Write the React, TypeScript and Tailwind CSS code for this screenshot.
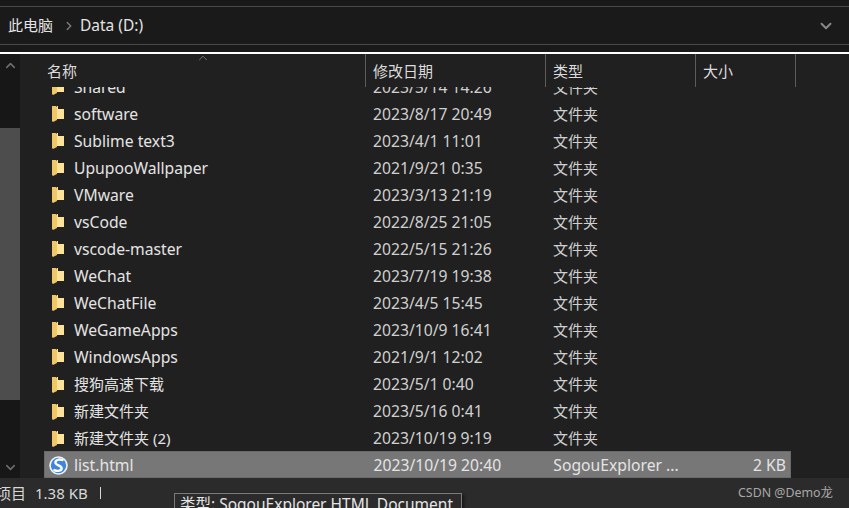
import { ChevronDown, ChevronRight, ChevronUp } from 'lucide-react';

const rows = [
  ['Shared', '2023/5/14 14:26'],
  ['software', '2023/8/17 20:49'],
  ['Sublime text3', '2023/4/1 11:01'],
  ['UpupooWallpaper', '2021/9/21 0:35'],
  ['VMware', '2023/3/13 21:19'],
  ['vsCode', '2022/8/25 21:05'],
  ['vscode-master', '2022/5/15 21:26'],
  ['WeChat', '2023/7/19 19:38'],
  ['WeChatFile', '2023/4/5 15:45'],
  ['WeGameApps', '2023/10/9 16:41'],
  ['WindowsApps', '2021/9/1 12:02'],
  ['搜狗高速下载', '2023/5/1 0:40'],
  ['新建文件夹', '2023/5/16 0:41'],
  ['新建文件夹 (2)', '2023/10/19 9:19'],
];

function FolderIcon() {
  return (
    <svg width="13" height="18" viewBox="0 0 13 18" className="shrink-0">
      <path d="M0 1h4l1 1v13l-4 2-1-1z" fill="#f0c766" />
      <path d="M5 1h1v3h6v10H5z" fill="#fde29a" />
    </svg>
  );
}

function SogouIcon() {
  return (
    <svg width="19" height="19" viewBox="0 0 18 18" className="shrink-0">
      <circle cx="9" cy="9" r="8.800" fill="#f2f6fb" />
      <circle cx="9" cy="9" r="7.300" fill="#3f86e0" />
      <path d="M12.800 3.800C9.500 2.500 5.500 4 6.200 6.800 6.800 9 11.800 8.800 12 11.400 12.200 13.800 8.500 15 5 13.400" fill="none" stroke="#fff" strokeWidth="2.200" strokeLinecap="round" />
    </svg>
  );
}

export default function App() {
  return (
    <div className="w-[849px] h-[508px] overflow-hidden flex flex-col bg-[#202020] text-[#e4e4e4] text-[15px] font-['Noto_Sans','Noto_Sans_CJK_SC',sans-serif]">
      {/* address bar */}
      <div className="h-[7px] shrink-0 border-b border-[#4a4a4a] bg-[#191919]" />
      <div className="h-[38px] shrink-0 flex items-center justify-between border-b border-[#4a4a4a] bg-[#1a1a1a] pl-2 pr-[5px]">
        <div className="flex items-center">
          <span>此电脑</span>
          <ChevronRight size={14} strokeWidth={2.500} className="ml-[9px] mr-[4px] text-[#7a7a7a]" />
          <span className="text-[15.500px]">Data (D:)</span>
        </div>
        <ChevronDown size={18} strokeWidth={2.500} className="mr-[9px] text-[#8a8a8a]" />
      </div>
      <div className="h-[7px] shrink-0 bg-[#191919]" />
      <div className="h-[2px] shrink-0 bg-white" />

      <div className="flex-1 min-h-0 flex">
        {/* left scrollbar */}
        <div className="w-[20px] shrink-0 flex flex-col items-center bg-[#171717] pt-[4px] pb-[2px]">
          <ChevronUp size={15} strokeWidth={2.500} className="text-[#6e6e6e]" />
          <div className="w-full h-[272px] mt-[55px] mb-[60px] bg-[#4d4d4d]" />
          <ChevronDown size={15} strokeWidth={2.500} className="text-[#6e6e6e]" />
        </div>

        {/* list */}
        <div className="flex-1 min-w-0 flex flex-col pl-[24px]">
          <div className="relative h-[33px] shrink-0 flex text-[#dcdcdc]">
            <ChevronUp size={14} strokeWidth={1} className="absolute left-[152px] -top-[3px] text-[#b0b0b0]" />
            <div className="w-[322px] pl-[3px] pt-[6px] border-r border-[#5c5c5c]">名称</div>
            <div className="w-[180px] pl-[7px] pt-[6px] border-r border-[#5c5c5c]">修改日期</div>
            <div className="w-[150px] pl-[7px] pt-[6px] border-r border-[#5c5c5c]">类型</div>
            <div className="w-[100px] pl-[7px] pt-[6px] border-r border-[#5c5c5c]">大小</div>
          </div>
          <div className="h-[364px] shrink-0 overflow-hidden">
            <div className="-mt-[13px]">
              {rows.map(([name, date]) => (
                <div key={name} className="h-[27px] flex items-center">
                  <div className="w-[322px] flex items-center pl-[8px]">
                    <FolderIcon />
                    <span className={/^[\u4e00-\u9fff]/.test(name) ? 'ml-[9px]' : 'ml-[9px] text-[15.700px]'}>{name}</span>
                  </div>
                  <div className="w-[180px] pl-[7px] text-[15.700px] text-[#d0d0d0]">{date}</div>
                  <div className="w-[150px] pl-[7px] text-[#d0d0d0]">文件夹</div>
                </div>
              ))}
            </div>
          </div>
          <div className="h-[27px] w-[747px] shrink-0 flex items-center bg-[#777777] border border-[#6a6a6a] text-[15.700px] pt-[2px]">
            <div className="w-[322px] flex items-center pl-[4px]">
              <SogouIcon />
              <span className="ml-[6px]">list.html</span>
            </div>
            <div className="w-[180px] pl-[7px]">2023/10/19 20:40</div>
            <div className="w-[150px] pl-[7px] whitespace-nowrap">SogouExplorer ...</div>
            <div className="w-[94px] pr-[4px] text-right">2 KB</div>
          </div>
        </div>
      </div>

      {/* status bar */}
      <div className="relative h-[30px] shrink-0 flex items-center bg-[#2b2b2b] text-[15px] text-[#d8d8d8]">
        <span className="-ml-[4px]">项目</span>
        <span className="ml-[9px]">1.38 KB</span>
        <span className="ml-[12px] w-px h-[12px] bg-[#d8d8d8]" />
        <div className="absolute left-[174px] top-[15px] h-[20px] w-[288px] bg-[#2b2b2b] border border-[#7a7a7a] shadow-[2px_2px_3px_rgba(0,0,0,0.5)] pl-[5px] whitespace-nowrap text-[15.500px] leading-[20px] text-[#e4e4e4]">
          类型: SogouExplorer HTML Document
        </div>
        <span className="absolute right-[16px] top-[6px] text-[12.400px] text-[#a8a8a8]">CSDN @Demo龙</span>
      </div>
    </div>
  );
}
